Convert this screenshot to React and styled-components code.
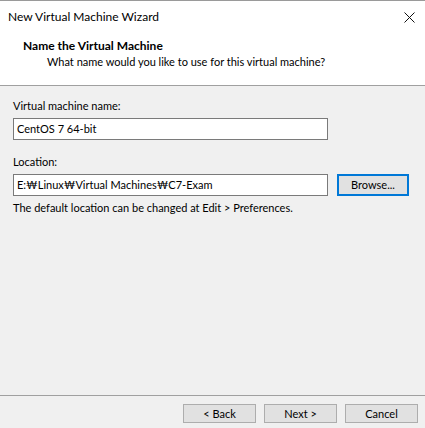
import styled, { createGlobalStyle } from "styled-components"

const GlobalStyle = createGlobalStyle`
    html, body {
        margin: 0;
        padding: 0;
        background: #f0f0f0;
    }
    body {
        font-family: Lato, "Noto Sans CJK KR", sans-serif;
        font-size: 11px;
        color: #000;
    }
`;

function CloseIcon() {
    return (
        <svg width="11" height="11" viewBox="0 0 11 11">
            <path d="M0.5 0.5 L10.5 10.5 M10.5 0.5 L0.5 10.5" stroke="#111" strokeWidth="1" fill="none" />
        </svg>
    )
}

function App() {
    return (
        <Window>
            <GlobalStyle />
            <Top>
                <TitleBar>
                    <Title>New Virtual Machine Wizard</Title>
                    <CloseButton><CloseIcon /></CloseButton>
                </TitleBar>
                <Header>
                    <HeaderTitle>Name the Virtual Machine</HeaderTitle>
                    <HeaderSub>What name would you like to use for this virtual machine?</HeaderSub>
                </Header>
            </Top>

            <Content>
                <Label>Virtual machine name:</Label>
                <Field>
                    <TextBox>CentOS 7 64-bit</TextBox>
                </Field>

                <Label spaced>Location:</Label>
                <Field>
                    <TextBox>E:₩Linux₩Virtual Machines₩C7-Exam</TextBox>
                    <Button focused>Browse...</Button>
                </Field>
                <Hint>The default location can be changed at Edit &gt; Preferences.</Hint>
            </Content>

            <Footer>
                <Button>&lt; Back</Button>
                <Button>Next &gt;</Button>
                <Button>Cancel</Button>
            </Footer>
        </Window>
    )
}

export default App

const Window = styled.div`
    display: flex;
    flex-direction: column;
    width: 425px;
    height: 428px;
    box-sizing: border-box;
    border-top: 1px solid #9a9a9a;
    overflow: hidden;
`;

const Top = styled.div`
    background: #fff;
    border-bottom: 1px solid #a0a0a0;
`;

const TitleBar = styled.div`
    display: flex;
    align-items: center;
    justify-content: space-between;
    height: 31px;
    padding: 0 10px 0 8px;
`;

const Title = styled.div`
    font-size: 12px;
    line-height: 16px;
    color: #000;
`;

const CloseButton = styled.div`
    display: flex;
    align-items: center;
    padding-top: 1px;
`;

const Header = styled.div`
    padding: 6px 0 15px 23px;
`;

const HeaderTitle = styled.div`
    font-size: 12px;
    font-weight: bold;
    line-height: 16px;
`;

const HeaderSub = styled.div`
    line-height: 16px;
    padding-left: 24px;
`;

const Content = styled.div`
    flex: 1;
    display: flex;
    flex-direction: column;
    padding: 12px 13px 0 13px;
`;

const Label = styled.div`
    line-height: 16px;
    margin-top: ${props => props.spaced ? "14px" : "0"};
    margin-bottom: 4px;
`;

const Field = styled.div`
    display: flex;
    align-items: center;
    gap: 9px;
`;

const TextBox = styled.div`
    box-sizing: border-box;
    width: 315px;
    height: 22px;
    line-height: 20px;
    padding: 0 3px;
    background: #fff;
    border: 1px solid #7a7a7a;
    white-space: nowrap;
`;

const Hint = styled.div`
    line-height: 16px;
    margin-top: 4px;
`;

const Footer = styled.div`
    display: flex;
    justify-content: flex-end;
    gap: 8px;
    padding: 8px 7px 5px 0;
    border-top: 1px solid #a0a0a0;
`;

const Button = styled.div`
    box-sizing: border-box;
    display: flex;
    align-items: center;
    justify-content: center;
    width: ${props => props.focused ? "72px" : "73px"};
    height: ${props => props.focused ? "22px" : "19px"};
    background: #e1e1e1;
    border: ${props => props.focused ? "2px solid #0078d7" : "1px solid #adadad"};
    color: #000;
    line-height: 16px;
`;
